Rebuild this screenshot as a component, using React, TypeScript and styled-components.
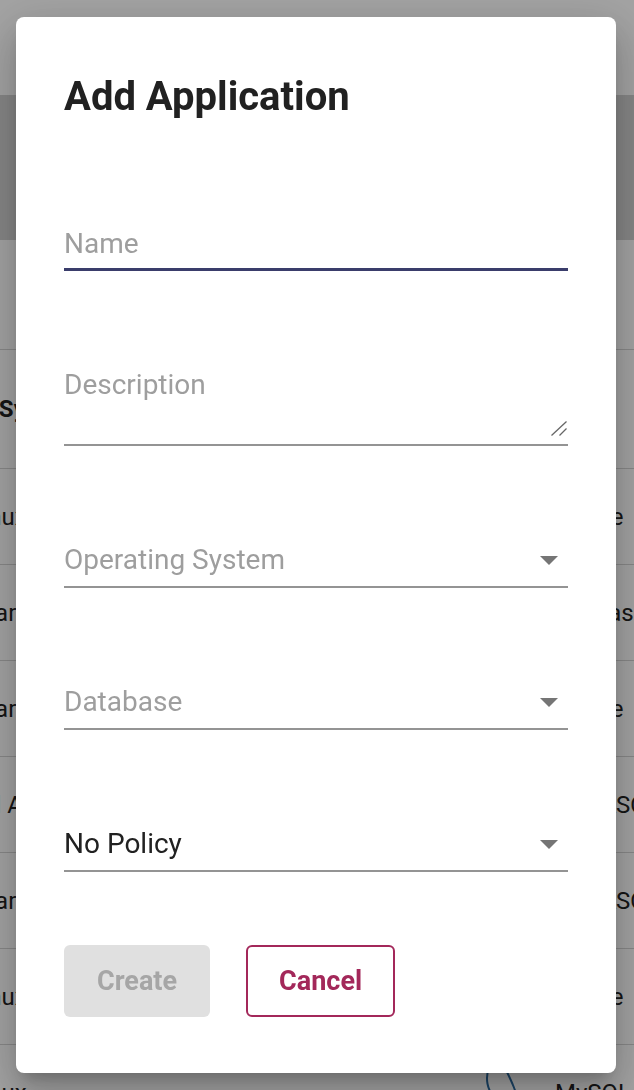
import React, { useState } from "react";
import styled, { createGlobalStyle } from "styled-components";

const GlobalStyle = createGlobalStyle`
  html, body { margin: 0; padding: 0; }
  body {
    font-family: Roboto, "Liberation Sans", Arial, sans-serif;
    background: #ffffff;
    overflow: hidden;
  }
  * { box-sizing: border-box; }
`;

/* ---------- page behind the dialog ---------- */

const Page = styled.div`
  width: 634px;
  height: 1090px;
  overflow: hidden;
  background: #ffffff;
  color: #212121;
`;

const AppBar = styled.header`
  height: 95px;
  background: #ffffff;
`;

const Banner = styled.div`
  height: 145px;
  background: #d2d2d2;
`;

const FilterBar = styled.div`
  height: 110px;
  border-bottom: 1px solid #d4d4d4;
`;

const Table = styled.div`
  margin-left: -113px;
  width: 900px;
`;

const Row = styled.div<{ $header?: boolean }>`
  display: grid;
  grid-template-columns: 300px 368px 232px;
  align-items: center;
  height: ${(p) => (p.$header ? 119 : 96)}px;
  border-bottom: 1px solid #d4d4d4;
  font-size: 24px;
  font-weight: ${(p) => (p.$header ? 700 : 400)};
  white-space: nowrap;
`;

const Cell = styled.div`
  display: flex;
  align-items: center;
  overflow: hidden;
`;

const IconCell = styled(Cell)`
  justify-content: flex-end;
  padding-right: 32px;
`;

/* ---------- modal ---------- */

const Overlay = styled.div`
  position: fixed;
  inset: 0;
  background: rgba(0, 0, 0, 0.36);
  display: flex;
  align-items: flex-start;
  padding: 17px 0 0 16px;
`;

const Dialog = styled.div`
  width: 600px;
  background: #ffffff;
  border-radius: 8px;
  padding: 56px 48px 56px;
  display: flex;
  flex-direction: column;
  box-shadow: 0 11px 15px -7px rgba(0, 0, 0, 0.2),
    0 24px 38px 3px rgba(0, 0, 0, 0.14), 0 9px 46px 8px rgba(0, 0, 0, 0.12);
`;

const Title = styled.h2`
  margin: 0;
  font-size: 40px;
  line-height: 48px;
  font-weight: 700;
  color: #212121;
`;

const Form = styled.form`
  display: flex;
  flex-direction: column;
  gap: 91px;
  margin-top: 99px;
`;

const Field = styled.div<{ $focused?: boolean; $multiline?: boolean }>`
  position: relative;
  display: flex;
  border-bottom: ${(p) => (p.$focused ? "3px solid #3a3d6b" : "2px solid #949494")};
  padding-bottom: ${(p) => (p.$multiline ? 8 : 0)}px;
`;

const TextInput = styled.input`
  flex: 1;
  width: 100%;
  height: 48px;
  margin: 0;
  padding: 6px 0 8px;
  border: none;
  outline: none;
  background: transparent;
  font-family: Roboto, "Liberation Sans", Arial, sans-serif;
  font-size: 28px;
  line-height: 34px;
  color: #212121;
  &::placeholder {
    color: #9e9e9e;
    opacity: 1;
  }
`;

const TextArea = styled.textarea`
  flex: 1;
  width: 100%;
  height: 74px;
  margin: 0;
  padding: 6px 0 0;
  border: none;
  outline: none;
  background: transparent;
  resize: none;
  font-family: Roboto, "Liberation Sans", Arial, sans-serif;
  font-size: 28px;
  line-height: 34px;
  color: #212121;
  &::placeholder {
    color: #9e9e9e;
    opacity: 1;
  }
`;

const ResizeGrip = styled.svg`
  position: absolute;
  right: 1px;
  bottom: 8px;
  pointer-events: none;
`;

const SelectBox = styled.div<{ $filled?: boolean }>`
  flex: 1;
  display: flex;
  align-items: center;
  justify-content: space-between;
  height: 49px;
  padding: 6px 10px 9px 0;
  font-size: 28px;
  line-height: 34px;
  color: ${(p) => (p.$filled ? "#212121" : "#9e9e9e")};
  cursor: pointer;
`;

const Actions = styled.div`
  display: flex;
  gap: 36px;
  margin-top: 73px;
`;

const Button = styled.button<{ $variant: "disabled" | "outlined" }>`
  height: 72px;
  padding: 0 31px;
  border-radius: 6px;
  font-family: Roboto, "Liberation Sans", Arial, sans-serif;
  font-size: 27px;
  font-weight: 700;
  border: 2px solid ${(p) => (p.$variant === "outlined" ? "#a3285a" : "transparent")};
  background: ${(p) => (p.$variant === "outlined" ? "#ffffff" : "#e0e0e0")};
  color: ${(p) => (p.$variant === "outlined" ? "#a3285a" : "#a6a6a6")};
  cursor: ${(p) => (p.$variant === "outlined" ? "pointer" : "default")};
`;

const Arrow = () => (
  <svg width="18" height="9" viewBox="0 0 18 9" aria-hidden="true">
    <polygon points="0,0 18,0 9,9" fill="#757575" />
  </svg>
);

const Curve = () => (
  <svg width="40" height="50" viewBox="0 0 40 50" aria-hidden="true">
    <path d="M6 0 C 2 10, 4 22, 12 30 M22 0 C 28 12, 34 24, 38 44" stroke="#2a6aa0" strokeWidth="2" fill="none" />
  </svg>
);

const rows: [string, string][] = [
  ["Ubuntu Linux", "Oracle"],
  ["Oracle Solaris", "Firebase"],
  ["Oracle Solaris", "Oracle"],
  ["Embedded Android", "SparkSQL"],
  ["Oracle Solaris", "SparkSQL"],
  ["Ubuntu Linux", "Oracle"],
  ["Ubuntu Linux", "MySQL"],
];

export default function App() {
  const [name, setName] = useState("");
  const [description, setDescription] = useState("");

  return (
    <>
      <GlobalStyle />
      <Page>
        <AppBar />
        <Banner />
        <FilterBar />
        <Table>
          <Row $header>
            <Cell>Operating System</Cell>
            <Cell />
            <Cell>DB</Cell>
          </Row>
          {rows.map(([os, db], i) => (
            <Row key={i}>
              <Cell>{os}</Cell>
              <IconCell>{i === rows.length - 1 ? <Curve /> : null}</IconCell>
              <Cell>{db}</Cell>
            </Row>
          ))}
        </Table>
      </Page>
      <Overlay>
        <Dialog role="dialog" aria-labelledby="add-app-title">
          <Title id="add-app-title">Add Application</Title>
          <Form onSubmit={(e) => e.preventDefault()}>
            <Field $focused>
              <TextInput
                placeholder="Name"
                value={name}
                onChange={(e) => setName(e.target.value)}
              />
            </Field>
            <Field $multiline>
              <TextArea
                rows={2}
                placeholder="Description"
                value={description}
                onChange={(e) => setDescription(e.target.value)}
              />
              <ResizeGrip width="16" height="15" viewBox="0 0 16 15" aria-hidden="true">
                <line x1="15.5" y1="0.5" x2="0.5" y2="14.5" stroke="#666" strokeWidth="1.3" />
                <line x1="15.5" y1="7.5" x2="8.5" y2="14.5" stroke="#666" strokeWidth="1.3" />
              </ResizeGrip>
            </Field>
            <Field>
              <SelectBox role="button">
                <span>Operating System</span>
                <Arrow />
              </SelectBox>
            </Field>
            <Field>
              <SelectBox role="button">
                <span>Database</span>
                <Arrow />
              </SelectBox>
            </Field>
            <Field>
              <SelectBox role="button" $filled>
                <span>No Policy</span>
                <Arrow />
              </SelectBox>
            </Field>
          </Form>
          <Actions>
            <Button type="button" $variant="disabled" disabled>
              Create
            </Button>
            <Button type="button" $variant="outlined">
              Cancel
            </Button>
          </Actions>
        </Dialog>
      </Overlay>
    </>
  );
}
